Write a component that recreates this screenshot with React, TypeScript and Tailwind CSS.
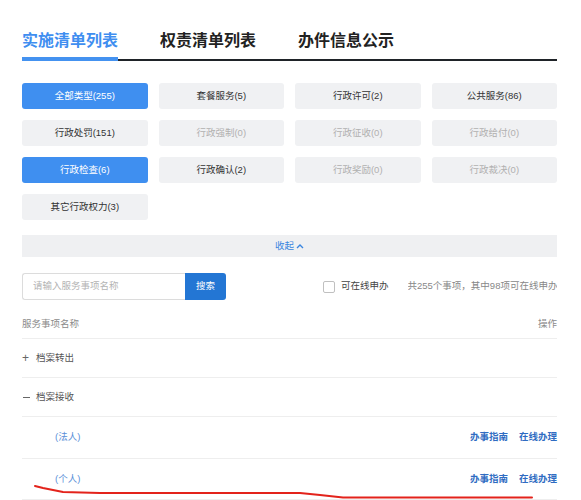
import React from "react";

const font = { fontFamily: '"Liberation Sans","Noto Sans CJK SC",sans-serif' };

type Btn = { label: string; kind: "active" | "normal" | "disabled" };

const buttons: Btn[] = [
  { label: "全部类型(255)", kind: "active" },
  { label: "套餐服务(5)", kind: "normal" },
  { label: "行政许可(2)", kind: "normal" },
  { label: "公共服务(86)", kind: "normal" },
  { label: "行政处罚(151)", kind: "normal" },
  { label: "行政强制(0)", kind: "disabled" },
  { label: "行政征收(0)", kind: "disabled" },
  { label: "行政给付(0)", kind: "disabled" },
  { label: "行政检查(6)", kind: "active" },
  { label: "行政确认(2)", kind: "normal" },
  { label: "行政奖励(0)", kind: "disabled" },
  { label: "行政裁决(0)", kind: "disabled" },
  { label: "其它行政权力(3)", kind: "normal" },
];

function btnClass(kind: Btn["kind"]) {
  if (kind === "active") return "bg-[#3f8ff0] text-white";
  if (kind === "disabled") return "bg-[#f0f1f3] text-[#b0b0b0]";
  return "bg-[#f0f1f3] text-[#333333]";
}

export default function App() {
  return (
    <div className="relative w-[581px] h-[500px] overflow-hidden bg-white" style={font}>
      <div className="ml-[22px] w-[535px] pt-[30px]">
        {/* Tabs */}
        <div className="flex items-start gap-[42px] border-b-2 border-[#1f2328]">
          <div className="h-[31px] -mb-[2px] border-b-4 border-[#4492f0] text-[16px] leading-[22px] font-bold text-[#3f8ef0]">
            实施清单列表
          </div>
          <div className="h-[27px] text-[16px] leading-[22px] font-bold text-[#222222]">权责清单列表</div>
          <div className="h-[27px] text-[16px] leading-[22px] font-bold text-[#222222]">办件信息公示</div>
        </div>

        {/* Type buttons */}
        <div className="mt-[22px] grid grid-cols-4 gap-x-[11px] gap-y-[11px]">
          {buttons.map((b) => (
            <div
              key={b.label}
              className={`h-[26px] rounded-[3px] flex items-center justify-center text-[9.5px] ${btnClass(b.kind)}`}
            >
              {b.label}
            </div>
          ))}
        </div>

        {/* Collapse bar */}
        <div className="mt-[15px] h-[22px] bg-[#eff0f2] flex items-center justify-center text-[9.5px] text-[#3a86e0]">
          <span>收起</span>
          <svg width="8" height="6" viewBox="0 0 8 6" className="ml-[2px]">
            <polyline points="1,5 4,2 7,5" fill="none" stroke="#3a86e0" strokeWidth="1.4" />
          </svg>
        </div>

        {/* Search row */}
        <div className="mt-[16px] flex items-center h-[27px]">
          <div className="w-[163px] h-[27px] border border-[#dcdcdc] border-r-0 rounded-l-[3px] flex items-center pl-[10px] text-[9.5px] text-[#b4b4b4]">
            请输入服务事项名称
          </div>
          <div className="w-[41px] h-[27px] bg-[#2376d4] rounded-r-[3px] flex items-center justify-center text-[9.5px] text-white">
            搜索
          </div>
          <div className="ml-[97px] w-[12px] h-[12px] border border-[#c0c0c0] rounded-[2px]" />
          <div className="ml-[6px] text-[9.5px] text-[#444444] whitespace-nowrap">可在线申办</div>
          <div className="ml-[19px] flex-1 min-w-0 overflow-hidden whitespace-nowrap text-[9.5px] text-[#888888]">
            共255个事项，其中98项可在线申办
          </div>
        </div>

        {/* Table header */}
        <div className="mt-[10px] h-[29px] border-b border-[#eeeeee] flex items-center justify-between text-[9.5px] text-[#8a8a8a]">
          <span>服务事项名称</span>
          <span>操作</span>
        </div>

        {/* Rows */}
        <div className="h-[39px] border-b border-[#eeeeee] flex items-center text-[9.5px] text-[#555555]">
          <span className="w-[14px] text-[12px] text-[#666666] leading-none">+</span>
          <span>档案转出</span>
        </div>
        <div className="h-[39px] border-b border-[#eeeeee] flex items-center text-[9.5px] text-[#555555]">
          <span className="w-[14px] flex items-center">
            <span className="block w-[7px] h-[1px] bg-[#666666] ml-[1px]" />
          </span>
          <span>档案接收</span>
        </div>
        <div className="h-[42px] border-b border-[#eeeeee] flex items-center justify-between text-[9.5px]">
          <span className="ml-[33px] text-[#5a8fd8]">(法人)</span>
          <span className="flex gap-[11px] font-bold text-[#2f6cc2]">
            <span>办事指南</span>
            <span>在线办理</span>
          </span>
        </div>
        <div className="h-[41px] border-b border-[#eeeeee] flex items-center justify-between text-[9.5px]">
          <span className="ml-[33px] text-[#5a8fd8]">(个人)</span>
          <span className="flex gap-[11px] font-bold text-[#2f6cc2]">
            <span>办事指南</span>
            <span>在线办理</span>
          </span>
        </div>
      </div>

      {/* Red hand-drawn annotation line */}
      <svg className="absolute left-0 top-0 pointer-events-none" width="581" height="500">
        <polyline
          points="35,486 43,488 63,492 100,493 300,493 320,495 343,497.5 532,497.5"
          fill="none"
          stroke="#e3231b"
          strokeWidth="2"
          strokeLinejoin="round"
          strokeLinecap="round"
        />
      </svg>
    </div>
  );
}
